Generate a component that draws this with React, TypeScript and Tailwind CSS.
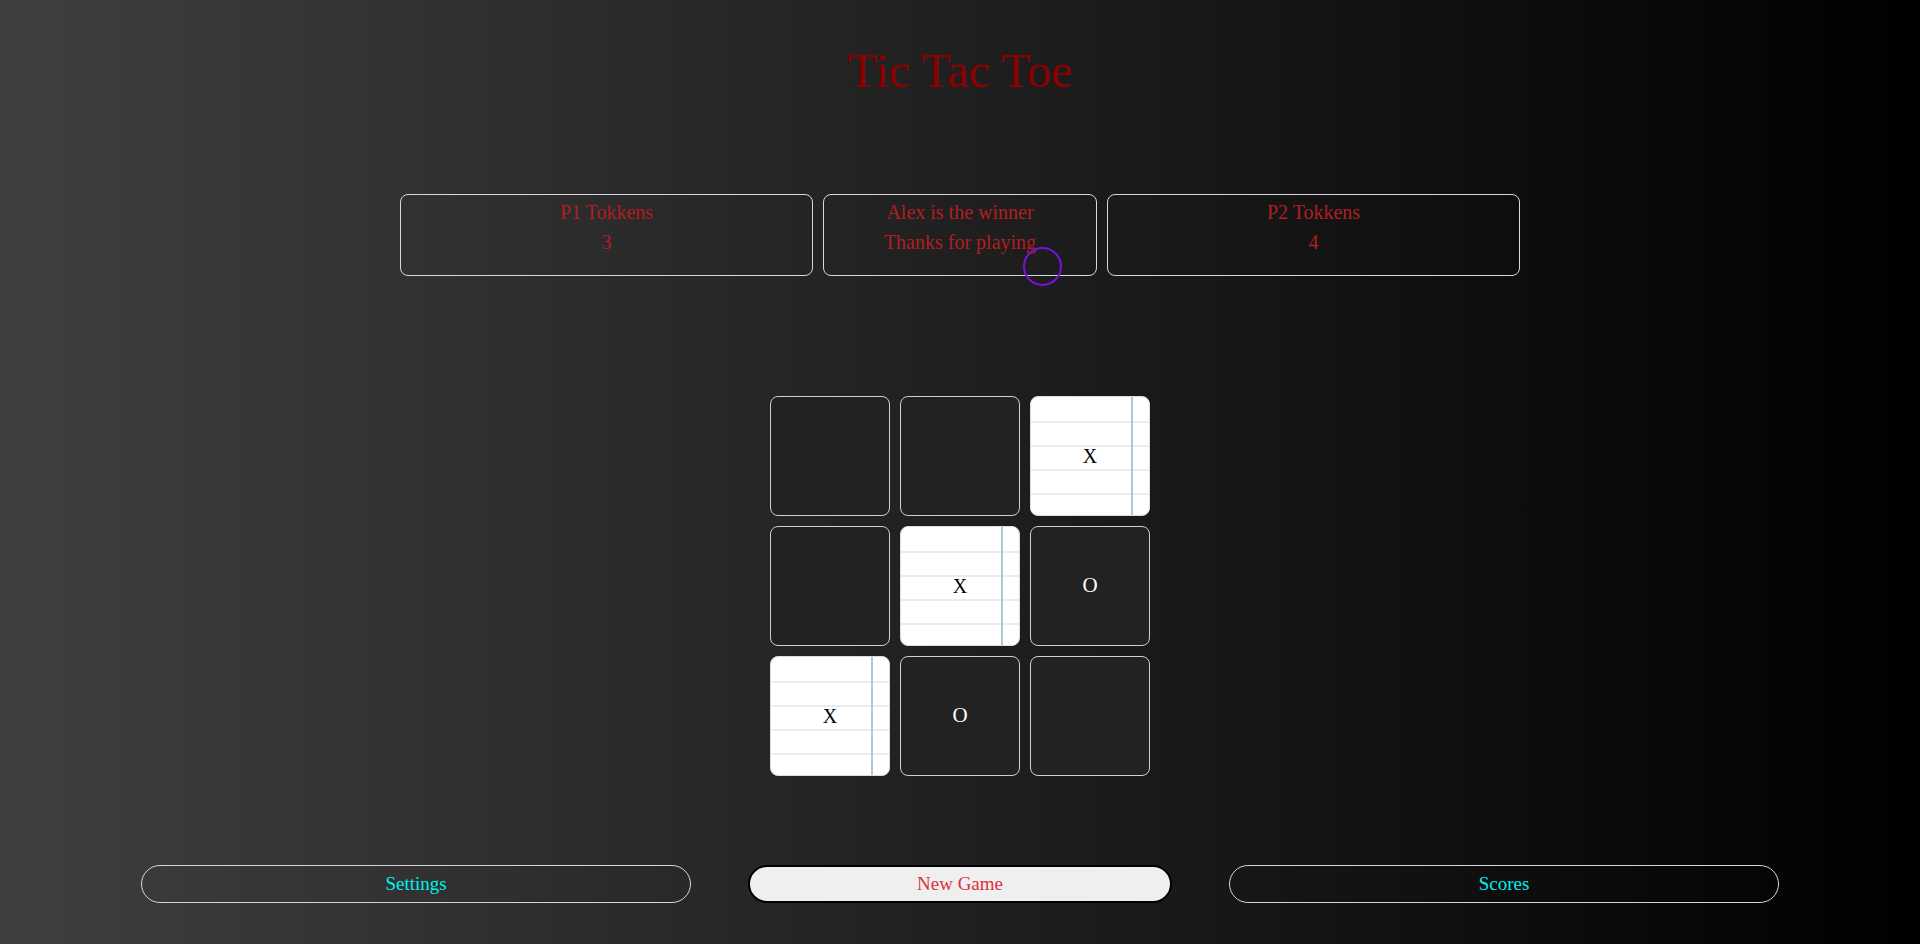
import React from "react";

type Mark = "X" | "O" | "";

const board: Mark[] = ["", "", "X", "", "X", "O", "X", "O", ""];

const serif = "font-['Liberation_Serif','DejaVu_Serif',serif]";

const Cell: React.FunctionComponent<{ mark: Mark }> = ({ mark }) => {
  if (mark === "X") {
    return (
      <div className="flex h-[120px] w-[120px] items-center justify-center rounded-lg border border-[#dcdcdc] bg-white bg-[image:linear-gradient(to_right,transparent_100px,#a6cbd4_100px,#a6cbd4_102px,transparent_102px),linear-gradient(to_bottom,transparent_24px,#ececec_24px,#ececec_26px,transparent_26px,transparent_48px,#ececec_48px,#ececec_50px,transparent_50px,transparent_72px,#ececec_72px,#ececec_74px,transparent_74px,transparent_96px,#ececec_96px,#ececec_98px,transparent_98px)] text-[20px] text-black">
        X
      </div>
    );
  }
  return (
    <div className="flex h-[120px] w-[120px] items-center justify-center rounded-lg border border-[#cfcfcf] bg-[#222] text-[21px] text-white">
      {mark}
    </div>
  );
};

const InfoBox: React.FunctionComponent<{
  top: string;
  bottom: string;
  className: string;
  children?: React.ReactNode;
}> = ({ top, bottom, className, children }) => {
  return (
    <div
      className={`relative flex h-[82px] flex-col items-center rounded-lg border border-[#d8d8d8] pt-[2px] text-[20px] leading-[30px] text-[#b01e22] ${className}`}
    >
      <span>{top}</span>
      <span>{bottom}</span>
      {children}
    </div>
  );
};

export default function App() {
  return (
    <div
      className={`flex h-[944px] w-full flex-col bg-[linear-gradient(to_right,#3f3f3f,#000)] ${serif}`}
    >
      <h1 className="pt-[47px] text-center text-[48px] leading-[48px] text-[#8b0000]">
        Tic Tac Toe
      </h1>

      <div className="mt-[99px] flex justify-center gap-[10px]">
        <InfoBox top="P1 Tokkens" bottom="3" className="w-[413px]" />
        <InfoBox top="Alex is the winner" bottom="Thanks for playing" className="w-[274px]">
          <div className="absolute left-[199px] top-[52px] h-[39px] w-[39px] rounded-full border-2 border-[#7a10dc]" />
        </InfoBox>
        <InfoBox top="P2 Tokkens" bottom="4" className="w-[413px]" />
      </div>

      <div className="mt-[120px] grid grid-cols-[repeat(3,120px)] justify-center gap-[10px]">
        {board.map((m, i) => (
          <Cell key={i} mark={m} />
        ))}
      </div>

      <div className="mt-[89px] flex justify-center gap-[57px] text-[19px]">
        <button className="h-[38px] w-[550px] rounded-full border border-[#d6d6d6] bg-transparent text-[#00f0f0]">
          Settings
        </button>
        <button className="h-[38px] w-[424px] rounded-full border-2 border-black bg-[#efefef] text-[#e0303a]">
          New Game
        </button>
        <button className="h-[38px] w-[550px] rounded-full border border-[#d6d6d6] bg-transparent text-[#00f0f0]">
          Scores
        </button>
      </div>
    </div>
  );
}
